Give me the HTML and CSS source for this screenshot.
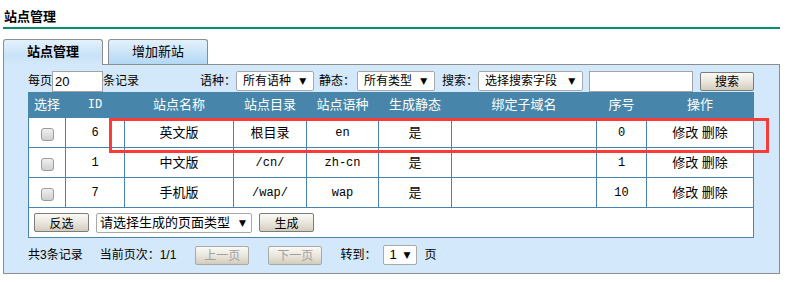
FILE: index.html
```html
<!DOCTYPE html>
<html lang="zh-CN">
<head>
    <meta charset="UTF-8">
    <title>站点管理</title>
    <link rel="stylesheet" href="styles.css">
</head>
<body>
<div class="page">
    <h1 class="title">站点管理</h1>

    <div class="tabs">
        <div class="tab active">站点管理</div>
        <div class="tab">增加新站</div>
    </div>

    <div class="panel">
        <div class="toolbar">
            <span>每页</span>
            <input class="txt per" type="text" value="20">
            <span>条记录</span>
            <span class="lbl lbl-lang">语种：</span>
            <div class="sel sel-lang">所有语种<i>▼</i></div>
            <span class="lbl lbl-static">静态：</span>
            <div class="sel sel-static">所有类型<i>▼</i></div>
            <span class="lbl lbl-search">搜索：</span>
            <div class="sel sel-field">选择搜索字段<i>▼</i></div>
            <input class="txt keyword" type="text">
            <button class="btn btn-search">搜索</button>
        </div>

        <table class="list">
            <colgroup>
                <col style="width:37px">
                <col style="width:59px">
                <col style="width:109px">
                <col style="width:73px">
                <col style="width:72px">
                <col style="width:73px">
                <col style="width:145px">
                <col style="width:50px">
                <col style="width:107px">
            </colgroup>
            <thead>
            <tr>
                <th>选择</th>
                <th class="mono">ID</th>
                <th>站点名称</th>
                <th>站点目录</th>
                <th>站点语种</th>
                <th>生成静态</th>
                <th>绑定子域名</th>
                <th>序号</th>
                <th>操作</th>
            </tr>
            </thead>
            <tbody>
            <tr>
                <td><span class="chk"></span></td>
                <td class="mono">6</td>
                <td>英文版</td>
                <td>根目录</td>
                <td class="mono">en</td>
                <td>是</td>
                <td></td>
                <td class="mono">0</td>
                <td><a>修改</a> <a>删除</a></td>
            </tr>
            <tr>
                <td><span class="chk"></span></td>
                <td class="mono">1</td>
                <td>中文版</td>
                <td class="mono">/cn/</td>
                <td class="mono">zh-cn</td>
                <td>是</td>
                <td></td>
                <td class="mono">1</td>
                <td><a>修改</a> <a>删除</a></td>
            </tr>
            <tr>
                <td><span class="chk"></span></td>
                <td class="mono">7</td>
                <td>手机版</td>
                <td class="mono">/wap/</td>
                <td class="mono">wap</td>
                <td>是</td>
                <td></td>
                <td class="mono">10</td>
                <td><a>修改</a> <a>删除</a></td>
            </tr>
            <tr class="foot">
                <td colspan="9">
                    <div class="foot-bar">
                        <button class="btn btn-inv">反选</button>
                        <div class="sel sel-type">请选择生成的页面类型<i>▼</i></div>
                        <button class="btn btn-gen">生成</button>
                    </div>
                </td>
            </tr>
            </tbody>
        </table>

        <div class="pager">
            <span>共3条记录</span>
            <span class="cur">当前页次：1/1</span>
            <button class="btn off btn-prev">上一页</button>
            <button class="btn off btn-next">下一页</button>
            <span class="goto">转到：</span>
            <div class="sel sel-page">1<i>▼</i></div>
            <span class="unit">页</span>
        </div>

        <!-- 标注框 -->
        <div class="mark"></div>
    </div>
</div>
</body>
</html>
```

FILE: styles.css
```css
body {
    margin: 0;
    font-family: "Liberation Sans", "Noto Sans CJK SC", sans-serif;
    font-size: 12px;
    color: #000;
    background: #fff;
}

.page {
    width: 777px;
    padding: 7px 0 0 3px;
}

.title {
    margin: 0;
    padding-left: 1px;
    height: 20px;
    line-height: 20px;
    font-size: 13px;
    font-weight: bold;
    border-bottom: 2px solid #00936b;
}

.tabs {
    display: flex;
    align-items: flex-end;
    gap: 5px;
    margin-top: 10px;
    height: 25px;
}

.tab {
    width: 98px;
    height: 24px;
    line-height: 24px;
    text-align: center;
    font-size: 13px;
    border: 1px solid #8d8d8d;
    border-bottom: none;
    border-radius: 3px 3px 0 0;
    background: linear-gradient(#e3f1fc, #c6e2f8 60%, #b2d8f5);
}

.tab.active {
    position: relative;
    z-index: 1;
    height: 25px;
    margin-bottom: -1px;
    font-weight: bold;
    background: linear-gradient(#e3f1fc, #c9e3f8 60%, #d3e8fa);
}

.panel {
    position: relative;
    height: 203px;
    padding: 5px 0 0 24px;
    border: 1px solid #8d8d8d;
    background: #d3e8fa;
}

.toolbar {
    display: flex;
    align-items: center;
    height: 22px;
    line-height: 16px;
}

.txt {
    box-sizing: border-box;
    height: 21px;
    margin: 0;
    padding: 1px 2px 0;
    border: 1px solid #a3a3a3;
    background: #fff;
    font-family: "Liberation Sans", sans-serif;
    font-size: 13px;
    outline: none;
}

.per {
    width: 51px;
    margin-left: 0;
}

.keyword {
    width: 104px;
    margin-left: 6px;
}

.lbl-lang {
    margin-left: 61px;
}

.lbl-static {
    margin-left: 5px;
}

.lbl-search {
    margin-left: 7px;
}

.sel {
    box-sizing: border-box;
    display: flex;
    align-items: center;
    justify-content: space-between;
    height: 20px;
    padding: 0 7px 0 6px;
    border: 1px solid #a9a9a9;
    border-radius: 2px;
    background: #fff;
    font-size: 12px;
    line-height: 16px;
}

.sel i {
    font-style: normal;
    font-size: 9px;
    font-family: "DejaVu Sans", sans-serif;
}

.sel-lang {
    width: 78px;
}

.sel-static {
    width: 78px;
    margin-left: 2px;
}

.sel-field {
    width: 105px;
}

.btn {
    box-sizing: border-box;
    width: 54px;
    height: 19px;
    margin: 0;
    padding: 0;
    border: 1px solid #7d7d7d;
    border-radius: 2px;
    background: linear-gradient(#fbfaf6, #e8e4da 55%, #d2ccbc);
    font-family: "Noto Sans CJK SC", sans-serif;
    font-size: 12px;
    line-height: 16px;
    color: #000;
}

.btn-search {
    margin-left: 7px;
}

.list {
    width: 725px;
    margin-top: 0;
    border-collapse: collapse;
    table-layout: fixed;
    background: #fff;
    font-size: 13px;
}

.list th {
    height: 24px;
    padding: 0;
    background: #4786aa;
    color: #fff;
    font-weight: normal;
    line-height: 16px;
    border: 1px solid #4786aa;
}

.list td {
    height: 29px;
    padding: 0;
    text-align: center;
    line-height: 16px;
    border: 1px solid #4a84ac;
}

.list .mono {
    font-family: "Liberation Mono", monospace;
    font-size: 12px;
}

.list td a {
    cursor: pointer;
}

.chk {
    display: inline-block;
    width: 11px;
    height: 11px;
    margin-top: 3px;
    border: 1px solid #9c9c9c;
    border-radius: 3px;
    background: linear-gradient(#f0f0f0, #cfcfcf);
    vertical-align: middle;
}

.list tr.foot td {
    text-align: left;
    padding-left: 5px;
}

.foot-bar {
    display: flex;
    align-items: center;
}

.btn-inv {
    width: 55px;
}

.sel-type {
    width: 156px;
    margin-left: 7px;
    padding: 0 5px 0 3px;
    font-size: 13px;
}

.btn-gen {
    width: 55px;
    margin-left: 7px;
}

.pager {
    display: flex;
    align-items: center;
    height: 22px;
    margin-top: 6px;
    line-height: 16px;
}

.cur {
    margin-left: 17px;
}

.btn.off {
    color: #a0a0a0;
    border-color: #a9a9a9;
}

.btn-prev {
    margin-left: 19px;
}

.btn-next {
    margin-left: 19px;
}

.goto {
    margin-left: 18px;
}

.sel-page {
    width: 34px;
    margin-left: 7px;
    padding: 0 6px 0 5px;
    font-family: "Liberation Sans", sans-serif;
    font-size: 13px;
}

.unit {
    margin-left: 7px;
}

.mark {
    position: absolute;
    left: 105px;
    top: 53px;
    width: 654px;
    height: 29px;
    border: 3px solid #fb3a3a;
}
```
